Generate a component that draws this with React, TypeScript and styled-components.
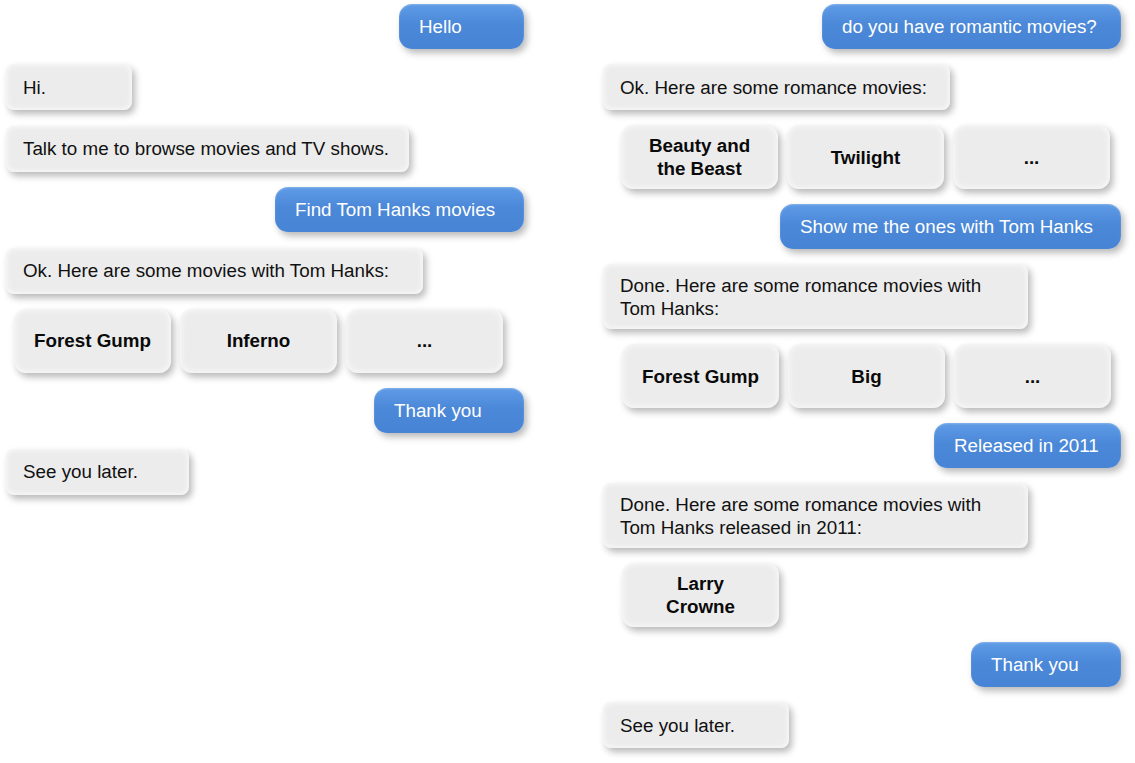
import React from "react";
import styled, { createGlobalStyle } from "styled-components";

const Global = createGlobalStyle`
  html, body { margin: 0; padding: 0; background: #ffffff; }
  body { font-family: "Liberation Sans", Arial, Helvetica, sans-serif; }
`;

const Page = styled.div`
  display: grid;
  grid-template-columns: 518px 518px;
  column-gap: 79px;
  padding: 4px 0 0 6px;
  width: 1135px;
  height: 763px;
  box-sizing: border-box;
`;

const Column = styled.div<{ $gap: number }>`
  display: flex;
  flex-direction: column;
  gap: ${(p) => p.$gap}px;
`;

const UserBubble = styled.div<{ $w: number }>`
  align-self: flex-end;
  box-sizing: border-box;
  width: ${(p) => p.$w}px;
  height: 45px;
  display: flex;
  align-items: center;
  padding: 0 0 0 20px;
  border-radius: 13px;
  background: linear-gradient(180deg, #5f9be6 0%, #4b88d8 45%, #4784d5 100%);
  box-shadow: 3px 4px 7px rgba(0, 0, 0, 0.28), inset 0 1px 2px rgba(255, 255, 255, 0.25);
  color: #ffffff;
  font-size: 18.8px;
  white-space: nowrap;
`;

const BotBubble = styled.div<{ $w: number; $tall?: boolean }>`
  align-self: flex-start;
  box-sizing: border-box;
  width: ${(p) => p.$w}px;
  height: ${(p) => (p.$tall ? 65 : 46)}px;
  display: flex;
  align-items: center;
  padding: 0 0 0 17px;
  border-radius: 8px;
  background: #ececec;
  box-shadow: 3px 4px 7px rgba(0, 0, 0, 0.28), inset 0 0 6px rgba(255, 255, 255, 0.95);
  color: #111111;
  font-size: 18.8px;
  line-height: 23px;
`;

const CardRow = styled.div<{ $indent: number }>`
  display: flex;
  gap: 9px;
  padding-left: ${(p) => p.$indent}px;
`;

const Card = styled.div`
  box-sizing: border-box;
  width: 157px;
  height: 64px;
  display: flex;
  align-items: center;
  justify-content: center;
  text-align: center;
  border-radius: 12px;
  background: #ececec;
  box-shadow: 3px 4px 7px rgba(0, 0, 0, 0.28), inset 0 0 7px rgba(255, 255, 255, 0.95);
  color: #0a0a0a;
  font-size: 18.8px;
  font-weight: bold;
  line-height: 23px;
`;

type Item =
  | { kind: "user"; text: string; w: number }
  | { kind: "bot"; text: React.ReactNode; w: number; tall?: boolean }
  | { kind: "cards"; items: React.ReactNode[]; indent: number };

const left: Item[] = [
  { kind: "user", text: "Hello", w: 125 },
  { kind: "bot", text: "Hi.", w: 126 },
  { kind: "bot", text: "Talk to me to browse movies and TV shows.", w: 403 },
  { kind: "user", text: "Find Tom Hanks movies", w: 249 },
  { kind: "bot", text: "Ok. Here are some movies with Tom Hanks:", w: 417 },
  { kind: "cards", items: ["Forest Gump", "Inferno", "..."], indent: 8 },
  { kind: "user", text: "Thank you", w: 150 },
  { kind: "bot", text: "See you later.", w: 183 },
];

const right: Item[] = [
  { kind: "user", text: "do you have romantic movies?", w: 299 },
  { kind: "bot", text: "Ok. Here are some romance movies:", w: 347 },
  {
    kind: "cards",
    items: [
      <>
        Beauty and
        <br />
        the Beast
      </>,
      "Twilight",
      "...",
    ],
    indent: 18,
  },
  { kind: "user", text: "Show me the ones with Tom Hanks", w: 341 },
  {
    kind: "bot",
    text: (
      <span>
        Done. Here are some romance movies with
        <br />
        Tom Hanks:
      </span>
    ),
    w: 425,
    tall: true,
  },
  { kind: "cards", items: ["Forest Gump", "Big", "..."], indent: 19 },
  { kind: "user", text: "Released in 2011", w: 187 },
  {
    kind: "bot",
    text: (
      <span>
        Done. Here are some romance movies with
        <br />
        Tom Hanks released in 2011:
      </span>
    ),
    w: 425,
    tall: true,
  },
  {
    kind: "cards",
    items: [
      <>
        Larry
        <br />
        Crowne
      </>,
    ],
    indent: 19,
  },
  { kind: "user", text: "Thank you", w: 150 },
  { kind: "bot", text: "See you later.", w: 186 },
];

const renderItem = (it: Item, i: number) => {
  if (it.kind === "user") return <UserBubble key={i} $w={it.w}>{it.text}</UserBubble>;
  if (it.kind === "bot")
    return (
      <BotBubble key={i} $w={it.w} $tall={it.tall}>
        {it.text}
      </BotBubble>
    );
  return (
    <CardRow key={i} $indent={it.indent}>
      {it.items.map((c, j) => (
        <Card key={j}>{c}</Card>
      ))}
    </CardRow>
  );
};

export default function App() {
  return (
    <>
      <Global />
      <Page>
        <Column $gap={15.4}>{left.map(renderItem)}</Column>
        <Column $gap={15}>{right.map(renderItem)}</Column>
      </Page>
    </>
  );
}
